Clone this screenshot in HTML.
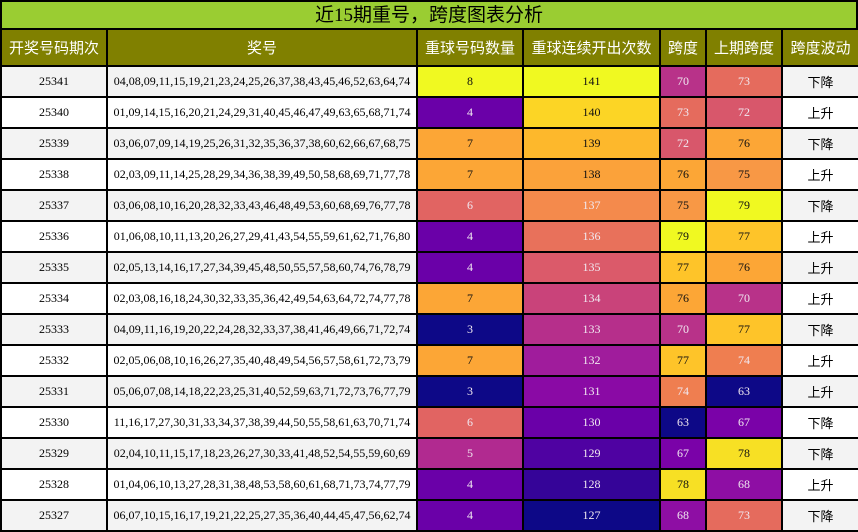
<!DOCTYPE html>
<html><head><meta charset="utf-8"><style>
*{margin:0;padding:0;box-sizing:border-box}
body{width:858px;height:531px;background:#fff;overflow:hidden;font-family:"Liberation Serif","Noto Serif CJK SC",serif}
.title{position:absolute;left:0;top:0;width:858px;height:29px;background:#9acd32;border:2px solid #000;border-bottom:none;text-align:center;font:19px/27px "Liberation Serif","Noto Sans CJK SC",sans-serif;color:#000}
table{position:absolute;left:0;top:28px;border-collapse:collapse;table-layout:fixed;width:858px}
td,th{border:2px solid #000;text-align:center;font-size:12px;padding:0;height:31px;overflow:hidden;white-space:nowrap}
th{background:#808000;color:#fff;font:normal 15px "Liberation Sans","Noto Sans CJK SC",sans-serif;height:37px}
tr:nth-child(even) td{background:#f3f3f3}
td.c{font-family:"Liberation Sans","Noto Sans CJK SC",sans-serif;font-size:13px}
.w{color:#f0e8f0}.k{color:#111}
</style></head><body>
<div class="title">近15期重号，跨度图表分析</div>
<table>
<colgroup><col style="width:106px"><col style="width:310px"><col style="width:106px"><col style="width:137px"><col style="width:46px"><col style="width:76px"><col style="width:77px"></colgroup>
<tr><th>开奖号码期次</th><th>奖号</th><th>重球号码数量</th><th>重球连续开出次数</th><th>跨度</th><th>上期跨度</th><th>跨度波动</th></tr>
<tr><td>25341</td><td>04,08,09,11,15,19,21,23,24,25,26,37,38,43,45,46,52,63,64,74</td><td class="k" style="background:#f0f921">8</td><td class="k" style="background:#f0f921">141</td><td class="w" style="background:#b83289">70</td><td class="w" style="background:#e56b5d">73</td><td class="c">下降</td></tr>
<tr><td>25340</td><td>01,09,14,15,16,20,21,24,29,31,40,45,46,47,49,63,65,68,71,74</td><td class="w" style="background:#6a00a8">4</td><td class="k" style="background:#fcd525">140</td><td class="w" style="background:#e56b5d">73</td><td class="w" style="background:#d8576b">72</td><td class="c">上升</td></tr>
<tr><td>25339</td><td>03,06,07,09,14,19,25,26,31,32,35,36,37,38,60,62,66,67,68,75</td><td class="k" style="background:#fca636">7</td><td class="k" style="background:#fdb82c">139</td><td class="w" style="background:#d8576b">72</td><td class="k" style="background:#fca636">76</td><td class="c">下降</td></tr>
<tr><td>25338</td><td>02,03,09,11,14,25,28,29,34,36,38,39,49,50,58,68,69,71,77,78</td><td class="k" style="background:#fca636">7</td><td class="k" style="background:#fba23a">138</td><td class="k" style="background:#fca636">76</td><td class="k" style="background:#f89845">75</td><td class="c">上升</td></tr>
<tr><td>25337</td><td>03,06,08,10,16,20,28,32,33,43,46,48,49,53,60,68,69,76,77,78</td><td class="w" style="background:#e16462">6</td><td class="w" style="background:#f48a4c">137</td><td class="k" style="background:#f89845">75</td><td class="k" style="background:#f0f921">79</td><td class="c">下降</td></tr>
<tr><td>25336</td><td>01,06,08,10,11,13,20,26,27,29,41,43,54,55,59,61,62,71,76,80</td><td class="w" style="background:#6a00a8">4</td><td class="w" style="background:#e8715b">136</td><td class="k" style="background:#f0f921">79</td><td class="k" style="background:#fec429">77</td><td class="c">上升</td></tr>
<tr><td>25335</td><td>02,05,13,14,16,17,27,34,39,45,48,50,55,57,58,60,74,76,78,79</td><td class="w" style="background:#6a00a8">4</td><td class="w" style="background:#db5a6a">135</td><td class="k" style="background:#fec429">77</td><td class="k" style="background:#fca636">76</td><td class="c">上升</td></tr>
<tr><td>25334</td><td>02,03,08,16,18,24,30,32,33,35,36,42,49,54,63,64,72,74,77,78</td><td class="k" style="background:#fca636">7</td><td class="w" style="background:#c9437a">134</td><td class="k" style="background:#fca636">76</td><td class="w" style="background:#b83289">70</td><td class="c">上升</td></tr>
<tr><td>25333</td><td>04,09,11,16,19,20,22,24,28,32,33,37,38,41,46,49,66,71,72,74</td><td class="w" style="background:#0d0887">3</td><td class="w" style="background:#b62f8b">133</td><td class="w" style="background:#b83289">70</td><td class="k" style="background:#fec429">77</td><td class="c">下降</td></tr>
<tr><td>25332</td><td>02,05,06,08,10,16,26,27,35,40,48,49,54,56,57,58,61,72,73,79</td><td class="k" style="background:#fca636">7</td><td class="w" style="background:#a01c9c">132</td><td class="k" style="background:#fec429">77</td><td class="w" style="background:#ef7e50">74</td><td class="c">上升</td></tr>
<tr><td>25331</td><td>05,06,07,08,14,18,22,23,25,31,40,52,59,63,71,72,73,76,77,79</td><td class="w" style="background:#0d0887">3</td><td class="w" style="background:#8a0aa5">131</td><td class="w" style="background:#ef7e50">74</td><td class="w" style="background:#0d0887">63</td><td class="c">上升</td></tr>
<tr><td>25330</td><td>11,16,17,27,30,31,33,34,37,38,39,44,50,55,58,61,63,70,71,74</td><td class="w" style="background:#e16462">6</td><td class="w" style="background:#6a00a8">130</td><td class="w" style="background:#0d0887">63</td><td class="w" style="background:#7a02a8">67</td><td class="c">下降</td></tr>
<tr><td>25329</td><td>02,04,10,11,15,17,18,23,26,27,30,33,41,48,52,54,55,59,60,69</td><td class="w" style="background:#b12a90">5</td><td class="w" style="background:#4f02a2">129</td><td class="w" style="background:#7a02a8">67</td><td class="k" style="background:#f7e024">78</td><td class="c">下降</td></tr>
<tr><td>25328</td><td>01,04,06,10,13,27,28,31,38,48,53,58,60,61,68,71,73,74,77,79</td><td class="w" style="background:#6a00a8">4</td><td class="w" style="background:#350498">128</td><td class="k" style="background:#f7e024">78</td><td class="w" style="background:#8e0ea4">68</td><td class="c">上升</td></tr>
<tr><td>25327</td><td>06,07,10,15,16,17,19,21,22,25,27,35,36,40,44,45,47,56,62,74</td><td class="w" style="background:#6a00a8">4</td><td class="w" style="background:#0d0887">127</td><td class="w" style="background:#8e0ea4">68</td><td class="w" style="background:#e56b5d">73</td><td class="c">下降</td></tr>
</table>
</body></html>
